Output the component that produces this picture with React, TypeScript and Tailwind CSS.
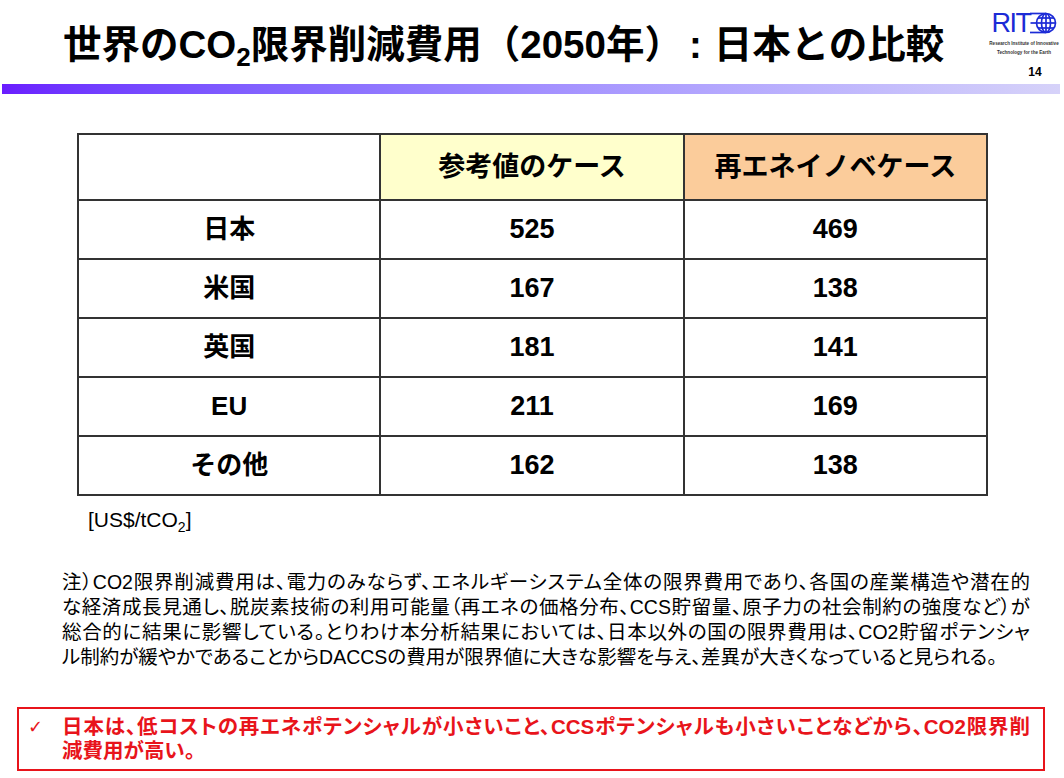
import React from "react";

const FONT = "font-['Liberation_Sans','Noto_Sans_CJK_JP',sans-serif]";

function Logo() {
  return (
    <div className="flex flex-col items-center w-[70px]">
      <div className="flex items-center h-[22px]">
        <span className="font-['Liberation_Sans',sans-serif] text-[27px] leading-[22px] text-[#1c2bd6] tracking-[-1.5px]">
          RIT
        </span>
        <svg width="28" height="22" viewBox="0 0 28 22" className="ml-[-2px]">
          <g fill="none" stroke="#1c2bd6" strokeWidth="1.7">
            <circle cx="17" cy="11" r="9.5" />
            <ellipse cx="17" cy="11" rx="4.5" ry="9.5" />
            <line x1="17" y1="1.5" x2="17" y2="20.5" />
            <line x1="1" y1="1.5" x2="17" y2="1.5" />
            <line x1="1" y1="20.5" x2="17" y2="20.5" />
            <line x1="1.5" y1="11" x2="26.5" y2="11" />
            <line x1="9" y1="6" x2="25" y2="6" />
            <line x1="9" y1="16" x2="25" y2="16" />
          </g>
        </svg>
      </div>
      <div className="mt-[5px] text-[4.6px] leading-[9px] font-bold text-[#333] font-['Liberation_Sans',sans-serif] whitespace-nowrap">
        Research Institute of Innovative
      </div>
      <div className="text-[4.6px] leading-[9px] font-bold text-[#333] font-['Liberation_Sans',sans-serif] whitespace-nowrap">
        Technology for the Earth
      </div>
    </div>
  );
}

const rows = [
  { name: "日本", a: "525", b: "469" },
  { name: "米国", a: "167", b: "138" },
  { name: "英国", a: "181", b: "141" },
  { name: "EU", a: "211", b: "169" },
  { name: "その他", a: "162", b: "138" },
];

const J = "[text-align-last:justify] text-justify";

export default function App() {
  return (
    <div className={`w-[1064px] h-[778px] bg-white text-black overflow-hidden ${FONT}`}>
      {/* Header */}
      <div className="flex h-[84px]">
        <div className="pl-[63px] pt-[25px] flex-1">
          <div className="text-[38.5px] leading-[40px] font-bold whitespace-nowrap">
            世界の<span className="font-['Liberation_Sans',sans-serif]">CO</span>
            <span className="text-[26px] relative top-[8px] font-['Liberation_Sans',sans-serif]">2</span>
            限界削減費用（<span className="font-['Liberation_Sans',sans-serif]">2050</span>年）
            <span className="font-['Liberation_Sans',sans-serif] ml-[6px] mr-[12px]">:</span>日本との比較
          </div>
        </div>
        <div className="w-[76px] flex flex-col items-center pt-[12px] pr-[4px]">
          <Logo />
          <div className="mt-[8px] ml-[22px] text-[12px] leading-[14px] font-bold font-['Liberation_Sans',sans-serif]">
            14
          </div>
        </div>
      </div>
      <div className="h-[10px] ml-[2px] mr-[4px] bg-linear-to-r from-[#6a1cff] via-[#a28eff] to-[#d6d2f9]" />

      {/* Table */}
      <div className="ml-[77px] mt-[39px]">
        <table className="border-collapse w-[911px] text-[27px] font-bold">
          <tbody>
            <tr className="h-[66px]">
              <td className="border-2 border-[#333] w-[303px]" />
              <td className="border-2 border-[#333] w-[304px] bg-[#ffffcc] text-center">
                参考値のケース
              </td>
              <td className="border-2 border-[#333] w-[304px] bg-[#fbcc9b] text-center">
                再エネイノベケース
              </td>
            </tr>
            {rows.map((r) => (
              <tr key={r.name} className="h-[59px]">
                <td className="border-2 border-[#333] text-center text-[26px]">{r.name}</td>
                <td className="border-2 border-[#333] text-center">{r.a}</td>
                <td className="border-2 border-[#333] text-center">{r.b}</td>
              </tr>
            ))}
          </tbody>
        </table>
      </div>

      {/* Unit */}
      <div className="ml-[88px] mt-[11px] text-[21px] leading-[26px] font-['Liberation_Sans',sans-serif]">
        [US$/tCO<span className="text-[14px] relative top-[5px]">2</span>]
      </div>

      {/* Notes */}
      <div className="ml-[62px] mt-[35px] w-[968px] text-[19.5px] leading-[25px] whitespace-nowrap [font-feature-settings:'palt']">
        <div className={J}>注）CO2限界削減費用は、電力のみならず、エネルギーシステム全体の限界費用であり、各国の産業構造や潜在的</div>
        <div className={J}>な経済成長見通し、脱炭素技術の利用可能量（再エネの価格分布、CCS貯留量、原子力の社会制約の強度など）が</div>
        <div className={J}>総合的に結果に影響している。とりわけ本分析結果においては、日本以外の国の限界費用は、CO2貯留ポテンシャ</div>
        <div>ル制約が緩やかであることからDACCSの費用が限界値に大きな影響を与え、差異が大きくなっていると見られる。</div>
      </div>

      {/* Conclusion box */}
      <div className="ml-[17px] mt-[37px] w-[1028px] h-[64px] border-2 border-[#e8141b] flex pt-[6px] text-[#e8141b]">
        <div className="w-[43px] flex-none pl-[9px] text-[18px] leading-[24px] font-['DejaVu_Sans',sans-serif]">✓</div>
        <div className="w-[968px] flex-none text-[20.5px] leading-[24px] font-bold whitespace-nowrap [font-feature-settings:'palt']">
          <div className={J}>日本は、低コストの再エネポテンシャルが小さいこと、CCSポテンシャルも小さいことなどから、CO2限界削</div>
          <div>減費用が高い。</div>
        </div>
      </div>
    </div>
  );
}
